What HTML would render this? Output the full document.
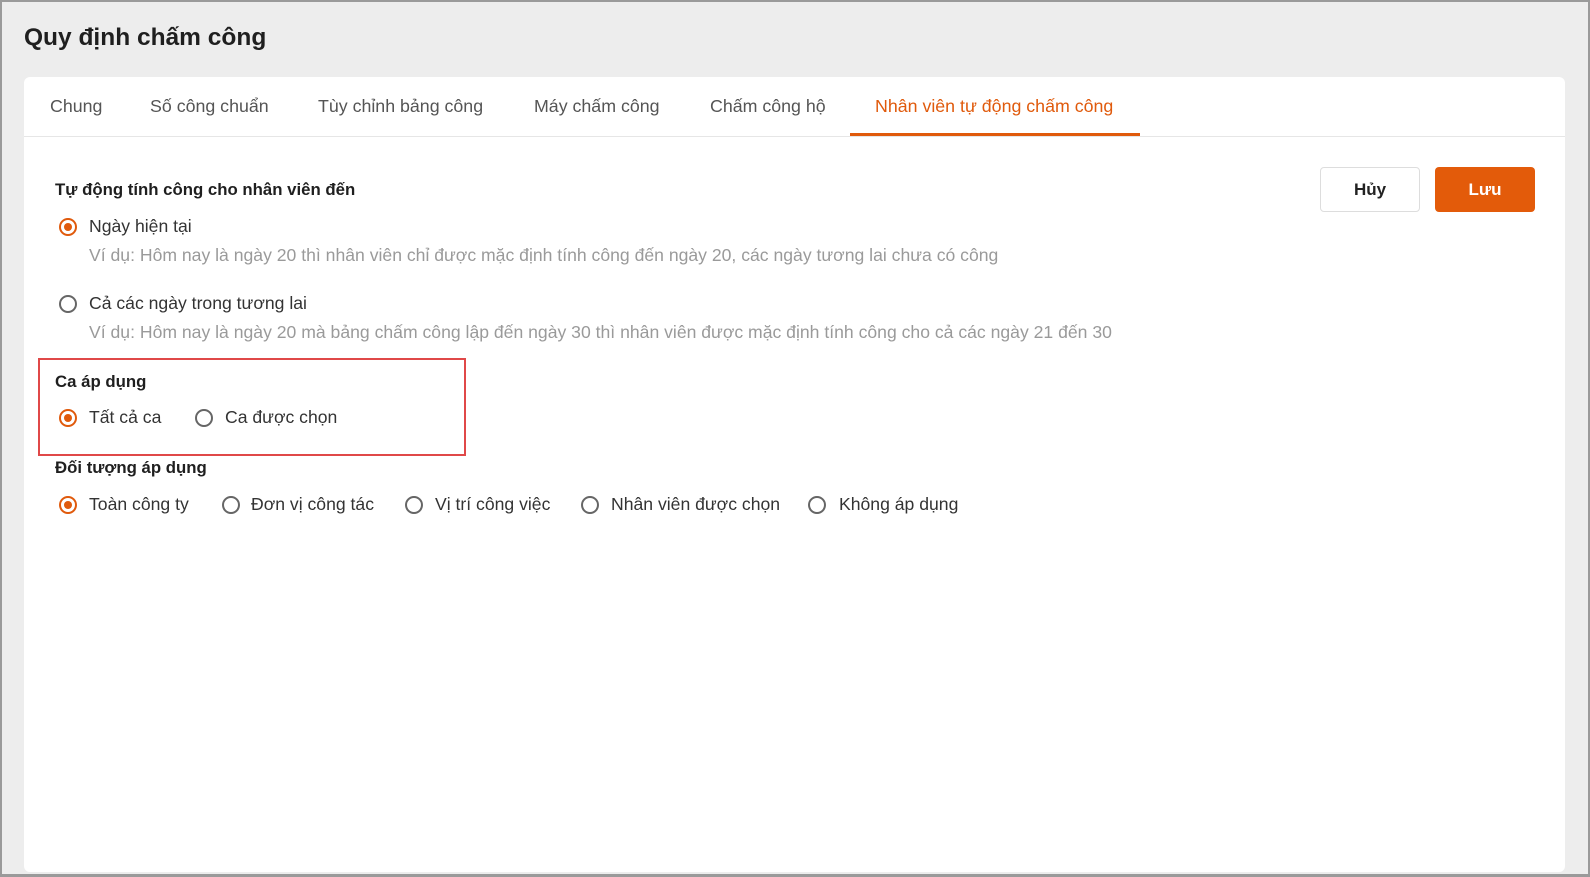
<!DOCTYPE html>
<html><head><meta charset="utf-8"><style>
*{margin:0;padding:0;box-sizing:border-box}
body{width:1590px;height:877px;overflow:hidden;background:#ededed;font-family:"Liberation Sans",sans-serif;position:relative;color:#222}
.frame{position:absolute;left:0;top:0;width:1590px;height:877px;border:2px solid #9a9a9a;border-bottom-width:3px;border-right-width:2px}
.t{position:absolute;white-space:nowrap}
h1{position:absolute;left:24px;top:24px;font-size:24.5px;font-weight:bold;color:#1f1f1f}
.card{position:absolute;left:24px;top:77px;width:1541px;height:795px;background:#fff;border-radius:6px}
.tabline{position:absolute;left:24px;top:136px;width:1541px;height:1px;background:#e6e6e6}
.tab{position:absolute;top:96px;font-size:17.8px;color:#555}
.act{color:#e05a0c}
.ul{position:absolute;left:850px;top:133px;width:290px;height:3px;background:#e05a0c}
.b{font-weight:bold;font-size:16.8px;color:#1f1f1f}
.r{position:absolute;width:18px;height:18px;border:2px solid #666;border-radius:50%;background:#fff}
.r.on{border-color:#e05a0c}
.r.on::after{content:"";position:absolute;left:3px;top:3px;width:8px;height:8px;border-radius:50%;background:#e05a0c}
.l{font-size:17.6px;color:#333}
.g{font-size:17.6px;color:#9a9a9a}
.btn{position:absolute;top:167px;width:100px;height:45px;border-radius:4px;font-size:17px;font-weight:bold;display:flex;align-items:center;justify-content:center}
</style></head><body>
<div class="frame"></div>
<h1>Quy định chấm công</h1>
<div class="card"></div>
<div class="tabline"></div>
<div class="t tab" style="left:50px">Chung</div>
<div class="t tab" style="left:150px">Số công chuẩn</div>
<div class="t tab" style="left:318px">Tùy chỉnh bảng công</div>
<div class="t tab" style="left:534px">Máy chấm công</div>
<div class="t tab" style="left:710px">Chấm công hộ</div>
<div class="t tab act" style="left:875px">Nhân viên tự động chấm công</div>
<div class="ul"></div>
<div class="btn" style="left:1320px;border:1px solid #ddd;background:#fff;color:#222">Hủy</div>
<div class="btn" style="left:1435px;background:#e35b0a;color:#fff">Lưu</div>

<div class="t b" style="left:55px;top:180px">Tự động tính công cho nhân viên đến</div>
<div class="r on" style="left:59px;top:218px"></div>
<div class="t l" style="left:89px;top:216px">Ngày hiện tại</div>
<div class="t g" style="left:89px;top:245px">Ví dụ: Hôm nay là ngày 20 thì nhân viên chỉ được mặc định tính công đến ngày 20, các ngày tương lai chưa có công</div>
<div class="r" style="left:59px;top:295px"></div>
<div class="t l" style="left:89px;top:293px">Cả các ngày trong tương lai</div>
<div class="t g" style="left:89px;top:322px">Ví dụ: Hôm nay là ngày 20 mà bảng chấm công lập đến ngày 30 thì nhân viên được mặc định tính công cho cả các ngày 21 đến 30</div>

<div style="position:absolute;left:38px;top:358px;width:428px;height:98px;border:2px solid #e04848"></div>
<div class="t b" style="left:55px;top:372px">Ca áp dụng</div>
<div class="r on" style="left:59px;top:409px"></div>
<div class="t l" style="left:89px;top:407px">Tất cả ca</div>
<div class="r" style="left:195px;top:409px"></div>
<div class="t l" style="left:225px;top:407px">Ca được chọn</div>

<div class="t b" style="left:55px;top:458px">Đối tượng áp dụng</div>
<div class="r on" style="left:59px;top:496px"></div>
<div class="t l" style="left:89px;top:494px">Toàn công ty</div>
<div class="r" style="left:222px;top:496px"></div>
<div class="t l" style="left:251px;top:494px">Đơn vị công tác</div>
<div class="r" style="left:405px;top:496px"></div>
<div class="t l" style="left:435px;top:494px">Vị trí công việc</div>
<div class="r" style="left:581px;top:496px"></div>
<div class="t l" style="left:611px;top:494px">Nhân viên được chọn</div>
<div class="r" style="left:808px;top:496px"></div>
<div class="t l" style="left:839px;top:494px">Không áp dụng</div>
</body></html>
